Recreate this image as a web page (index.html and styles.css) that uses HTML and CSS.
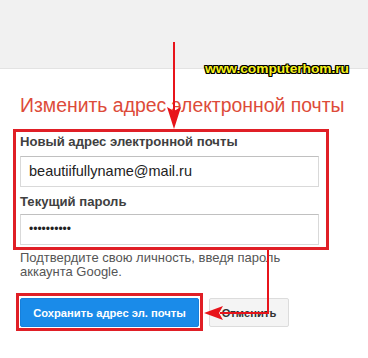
FILE: index.html
```html
<!DOCTYPE html>
<html lang="ru">
<head>
<meta charset="utf-8">
<link rel="stylesheet" href="styles.css">
</head>
<body>
<div class="page">
  <div class="topbar"></div>
  <div class="watermark">www.computerhom.ru</div>
  <main class="content">
    <h1 class="title">Изменить адрес электронной почты</h1>
    <div class="mark-box fields">
      <label class="label">Новый адрес электронной почты</label>
      <div class="input">beautiifullyname@mail.ru</div>
      <label class="label label-2">Текущий пароль</label>
      <div class="input input-pass">••••••••••</div>
    </div>
    <p class="help">Подтвердите свою личность, введя пароль аккаунта Google.</p>
    <div class="actions">
      <div class="mark-box save-wrap">
        <button class="btn btn-primary">Сохранить адрес эл. почты</button>
      </div>
      <button class="btn btn-cancel">Отменить</button>
    </div>
  </main>
  <svg class="arrows" width="368" height="358" viewBox="0 0 368 358">
    <line x1="174" y1="42" x2="174" y2="112" stroke="#e8141b" stroke-width="2"/>
    <polygon points="167,107 174,111 181,107 174,129" fill="#e8141b"/>
    <polyline points="268,250 268,313 220,313" fill="none" stroke="#e8141b" stroke-width="2"/>
    <polygon points="223,306 219,313 223,320 204,313" fill="#e8141b"/>
  </svg>
</div>
</body>
</html>
```

FILE: styles.css
```css
* { box-sizing: border-box; }
html, body { margin: 0; padding: 0; background: #fff; }
body { font-family: "Liberation Sans", Arial, sans-serif; }
.page { position: relative; width: 368px; height: 358px; overflow: hidden; }
.topbar { height: 69px; background: #f1f1f1; border-bottom: 1px solid #e3e3e3; }
.watermark {
  position: absolute; left: 205px; top: 61px;
  font-family: "Liberation Sans", Arial, sans-serif;
  font-weight: bold; font-size: 13.7px; line-height: 16px;
  color: #f6f01a;
  text-shadow: -1px -1px 0 #000, 1px -1px 0 #000, -1px 1px 0 #000, 1px 1px 0 #000, 0 1px 0 #000, 0 -1px 0 #000, 1px 0 0 #000, -1px 0 0 #000;
}
.content { padding-left: 20px; }
.title {
  margin: 24px 0 0; font-weight: normal; font-size: 19.4px; line-height: 24px;
  color: #dd4b39; white-space: nowrap;
}
.mark-box { border: 3px solid #e01f26; }
.fields { margin: 12px 0 0 -7px; width: 316px; padding: 2px 7px 2px 4px; }
.label {
  display: block; font-weight: bold; font-size: 13.1px; line-height: 16px; color: #404040;
  margin-bottom: 6px;
}
.label-2 { margin-top: 7px; margin-bottom: 4px; }
.input {
  width: 299px; height: 31px; border: 1px solid #d9d9d9; border-top-color: #c0c0c0;
  padding-left: 8px; font-size: 14.5px; line-height: 29px; color: #222; background: #fff;
}
.input-pass { font-size: 12px; letter-spacing: 0; }
.help {
  margin: 1px 0 0; width: 299px; font-size: 13px; line-height: 14px; color: #555;
}
.actions { display: flex; align-items: flex-start; margin-top: 14px; }
.save-wrap { margin-left: -4px; padding: 2px 1px 1px 1px; }
.btn {
  font-family: "Liberation Sans", Arial, sans-serif; font-weight: bold; font-size: 11.2px;
  height: 29px; border-radius: 2px; margin: 0; padding: 0; cursor: pointer;
}
.btn-primary { display: block; width: 179px; background: #1a8be9; border: 1px solid #1780dc; color: #fff; }
.btn-cancel {
  margin: 5px 0 0 6px; width: 80px; background: #f4f4f4; border: 1px solid #dcdcdc; color: #333;
}
.arrows { position: absolute; left: 0; top: 0; pointer-events: none; }
```
